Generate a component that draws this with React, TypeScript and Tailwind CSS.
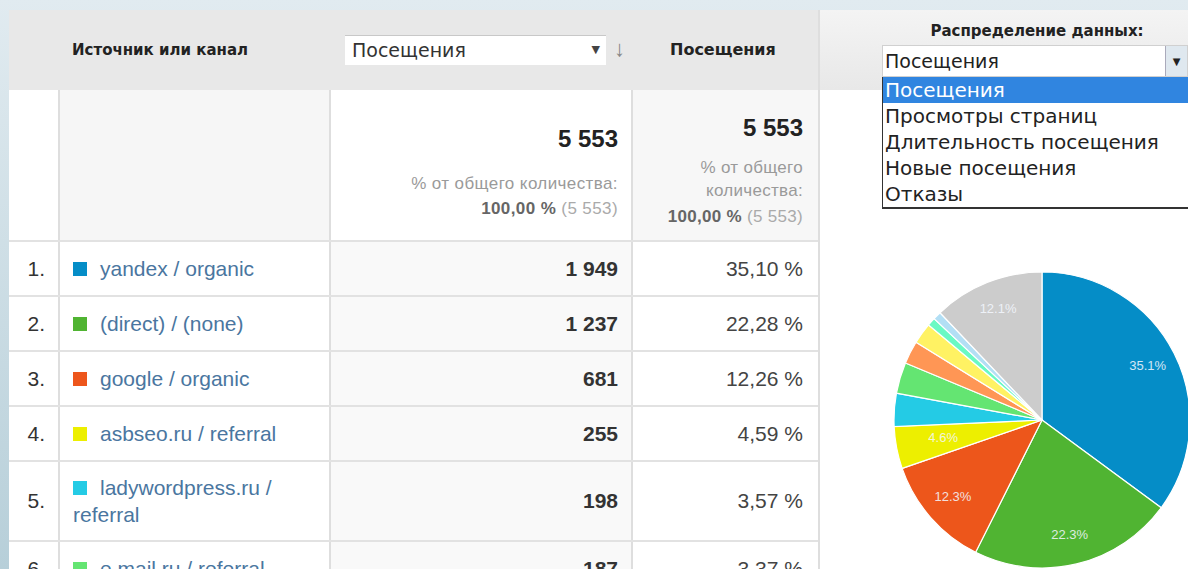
import React from 'react';

type Row = { n: number; label: string; color: string; visits: string; share: string; tall?: boolean };

const ROWS: Row[] = [
  { n: 1, label: 'yandex / organic', color: 'bg-[#058dc7]', visits: '1 949', share: '35,10 %' },
  { n: 2, label: '(direct) / (none)', color: 'bg-[#50b432]', visits: '1 237', share: '22,28 %' },
  { n: 3, label: 'google / organic', color: 'bg-[#ed561b]', visits: '681', share: '12,26 %' },
  { n: 4, label: 'asbseo.ru / referral', color: 'bg-[#edef00]', visits: '255', share: '4,59 %' },
  { n: 5, label: 'ladywordpress.ru / referral', color: 'bg-[#24cbe5]', visits: '198', share: '3,57 %', tall: true },
  { n: 6, label: 'e.mail.ru / referral', color: 'bg-[#64e572]', visits: '187', share: '3,37 %' },
];

const SLICES = [
  { v: 35.1, c: '#058dc7', label: '35.1%' },
  { v: 22.3, c: '#50b432', label: '22.3%' },
  { v: 12.3, c: '#ed561b', label: '12.3%' },
  { v: 4.6, c: '#edef00', label: '4.6%' },
  { v: 3.6, c: '#24cbe5' },
  { v: 3.4, c: '#64e572' },
  { v: 2.5, c: '#ff9655' },
  { v: 2.3, c: '#fff263' },
  { v: 0.9, c: '#6af9c4' },
  { v: 0.9, c: '#b2dff5' },
  { v: 12.1, c: '#cccccc', label: '12.1%' },
];

const MENU = ['Посещения', 'Просмотры страниц', 'Длительность посещения', 'Новые посещения', 'Отказы'];

const GRID = 'grid grid-cols-[51px_271px_302px_185px]';
const HEAD = "font-['DejaVu_Sans',sans-serif] font-bold text-[15px] text-[#222]";

function Pie() {
  const cx = 160;
  const cy = 160;
  const r = 148;
  let acc = 0;
  const pt = (pct: number, rad: number) => {
    const a = (pct / 100) * Math.PI * 2;
    return [cx + rad * Math.sin(a), cy - rad * Math.cos(a)];
  };
  return (
    <svg width="320" height="320" viewBox="0 0 320 320" className="shrink-0">
      {SLICES.map((s, i) => {
        const [x1, y1] = pt(acc, r);
        const [x2, y2] = pt(acc + s.v, r);
        const mid = acc + s.v / 2;
        acc += s.v;
        const [lx, ly] = pt(mid, s.v < 6 ? r * 0.68 : r * 0.8);
        return (
          <g key={i}>
            <path
              d={`M${cx} ${cy} L${x1} ${y1} A${r} ${r} 0 ${s.v > 50 ? 1 : 0} 1 ${x2} ${y2} Z`}
              fill={s.c}
              stroke="#fff"
              strokeWidth="1.2"
            />
            {s.label && (
              <text
                x={lx}
                y={ly}
                fill="#f4f8ff"
                fontSize="13"
                fontFamily="Liberation Sans, Arial, sans-serif"
                textAnchor="middle"
                dominantBaseline="middle"
                opacity="0.85"
              >
                {s.label}
              </text>
            )}
          </g>
        );
      })}
    </svg>
  );
}

export default function App() {
  return (
    <div className="h-[569px] w-[1188px] overflow-hidden bg-gradient-to-b from-[#e1ebf0] to-[#b7cfd9] pl-[9px] pt-[10px] font-['Liberation_Sans',Arial,sans-serif]">
      <div className="flex h-full bg-white">
        {/* table */}
        <div className="w-[809px] shrink-0">
          <div className={`${GRID} h-[80px] bg-[#e8e8e8]`}>
            <div />
            <div className={`flex items-center pl-3 ${HEAD}`}>Источник или канал</div>
            <div className="flex items-center gap-2 pl-[14px]">
              <div className="flex h-[30px] w-[261px] items-center justify-between border-t border-[#c8c8c8] bg-white pl-[7px] pr-[6px] font-['DejaVu_Sans',sans-serif] text-[19px] text-[#333]">
                <span>Посещения</span>
                <span className="text-[11px] text-[#444]">▼</span>
              </div>
              <span className="-mt-[3px] text-[22px] font-bold leading-none text-[#888]">↓</span>
            </div>
            <div className={`flex items-center pl-[37px] ${HEAD} text-[16px]`}>Посещения</div>
          </div>

          <div className={`${GRID} h-[152px] border-b-2 border-[#e2e2e2]`}>
            <div className="border-r-2 border-[#dedede] bg-white" />
            <div className="border-r-2 border-[#dedede] bg-[#f6f6f6]" />
            <div className="flex flex-col items-end border-r-2 border-[#dedede] bg-white pr-[13px] pt-[37px] text-right">
              <div className="text-[24px] font-bold leading-none text-[#222]">5 553</div>
              <div className="mt-[20px] text-[17px] leading-[25px] tracking-[0.4px] text-[#9a9a9a]">
                % от общего количества:
                <br />
                <b className="text-[#666]">100,00 %</b> <span className="text-[#aaa]">(5 553)</span>
              </div>
            </div>
            <div className="flex flex-col items-end bg-[#f7f7f7] pr-[15px] pt-[26px] text-right">
              <div className="text-[24px] font-bold leading-none text-[#222]">5 553</div>
              <div className="mt-[16px] text-[17px] leading-[23px] tracking-[0.3px] text-[#9a9a9a]">
                % от общего
                <br />
                количества:
                <br />
                <span className="leading-[30px]">
                  <b className="text-[#666]">100,00 %</b> <span className="text-[#aaa]">(5 553)</span>
                </span>
              </div>
            </div>
          </div>

          {ROWS.map((row) => (
            <div
              key={row.n}
              className={`${GRID} ${row.tall ? 'h-[80px]' : 'h-[55px]'} border-b-2 border-[#e2e2e2] text-[21px]`}
            >
              <div className="flex items-center justify-end border-r-2 border-[#dedede] pr-[13px] text-[#333]">{row.n}.</div>
              <div className="flex items-center border-r-2 border-[#dedede] pl-[13px] pr-4 leading-[27px] text-[#4a76a0]">
                <div>
                  <span className={`mr-[13px] inline-block h-[14px] w-[14px] ${row.color}`} />
                  {row.label}
                </div>
              </div>
              <div className="flex items-center justify-end border-r-2 border-[#dedede] bg-[#f9f9f9] pr-[13px] font-bold text-[#333]">
                {row.visits}
              </div>
              <div className="flex items-center justify-end pr-[15px] text-[#444]">{row.share}</div>
            </div>
          ))}
        </div>

        {/* distribution chart */}
        <div className="relative w-[370px] shrink-0 overflow-hidden border-l-2 border-[#dedede]">
          <div className="flex h-[80px] flex-col bg-gradient-to-b from-[#f4f4f4] to-[#e8e8e8] pl-[62px]">
            <div className={`mt-[12px] w-[310px] text-center leading-[18px] ${HEAD} text-[14px]`}>Распределение данных:</div>
            <div className="mt-[5px] flex h-[32px] shrink-0 border border-[#d0d0d0] bg-white font-['DejaVu_Sans',sans-serif] text-[19px] text-[#222]">
              <span className="flex flex-1 items-center pl-[2px]">Посещения</span>
              <span className="flex w-[22px] items-center justify-center border-l border-[#aab] bg-[#dfe8ef] text-[10px]">▼</span>
            </div>
          </div>

          <div className="absolute left-[62px] top-[67px] w-[320px] border-b-2 border-l border-[#333] bg-white font-['DejaVu_Sans',sans-serif] text-[20px] leading-[26px] text-[#222]">
            {MENU.map((m, i) => (
              <div key={m} className={i === 0 ? 'bg-[#3085e0] pl-[2px] text-white' : 'pl-[2px]'}>
                {m}
              </div>
            ))}
          </div>

          <div className="flex pl-[62px] pt-[170px]">
            <Pie />
          </div>
        </div>
      </div>
    </div>
  );
}
